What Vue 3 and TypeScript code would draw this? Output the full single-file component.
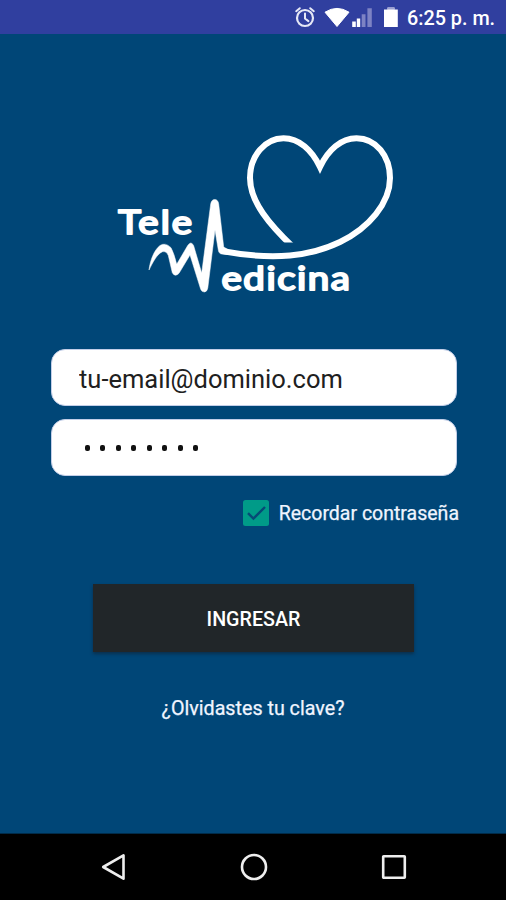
<script setup lang="ts">
import { ref } from 'vue'

const email = ref<string>('tu-email@dominio.com')
const passwordLength = 8
const remember = ref<boolean>(true)
</script>

<template>
  <div class="screen">
    <header class="status">
      <svg class="status-icons" viewBox="290 0 112 34" width="112" height="34">
        <g fill="none" stroke="#e6e8f6" stroke-width="2.2" stroke-linecap="round">
          <circle cx="305" cy="18" r="8" />
          <path d="M305 13.5v5l3.4 2.6M296.2 11.2l3.6-3M313.8 11.2l-3.6-3" stroke-width="2" />
        </g>
        <path d="M325 12.2Q337 4.6 349 12.2L337 26.5Z" fill="#fff" stroke="#fff" stroke-linejoin="round" />
        <path d="M352.2 21.5h3.6V27h-3.6zM356.8 18.6h3.4V27h-3.4z" fill="#fff" />
        <path d="M361.7 14.2h3.8V27h-3.8zM367.4 8.2h4.4V27h-4.4z" fill="#7d83c4" />
        <path d="M384 9.5h3.5V7.6h7v1.9h3.3V27H384z" fill="#fff" />
        <path d="M387.5 7.6h7v1.9h-7z" fill="#9da1d2" />
      </svg>
      <span class="clock">6:25 p. m.</span>
    </header>

    <main class="content">
      <svg class="logo" viewBox="110 125 290 175" width="290" height="175">
        <defs>
          <clipPath id="heart-cut">
            <path d="M110 125H400V300H110ZM274 242.6H300V249.5H274Z" clip-rule="evenodd" />
          </clipPath>
        </defs>
        <path
          d="M293 247C270 225 250 202 250 178C250 156 265 138.2 283.5 138.2C299 138.2 312 150 320 167C328 150 341 138.2 356.5 138.2C376 138.2 390 156 390 178C390 203 369 228 340 242C311 256 275 261 221.5 251"
          fill="none" stroke="#fff" stroke-width="6" clip-path="url(#heart-cut)" />
        <path
          d="M149 270C150 261 154 250 160 245.5Q165.5 242 171 247.7Q174 253 176.7 264.3L187.7 245.5Q191 240.5 193.6 245.5L201.7 273L210.7 204Q211.5 199.5 214.7 199.5Q218 199.5 218.7 204L223.7 247L228 249.5V254.5L220.5 253.7Q218.5 253 218.3 250L215 230L207.8 288Q207 292 204.3 292Q201.5 292 200.7 289.3L190 255L179 273.3Q175 277.5 172.3 272.7L168.3 255.5Q166.5 251 162.5 251.7C157 254 153 262 149 270Z"
          fill="#fff" stroke="#fff" stroke-width="0.5" />
        <g class="wordmark">
          <text transform="translate(118.3 233.5) scale(1.2 1)" textLength="61.5">Tele</text>
          <text transform="translate(221.5 290) scale(1.2 1)" textLength="107">edicina</text>
        </g>
      </svg>

      <form class="form" @submit.prevent>
        <input v-model="email" class="field" type="text" aria-label="Email" />
        <div class="field password">
          <span v-for="n in passwordLength" :key="n" class="dot"></span>
        </div>
        <label class="remember">
          <input v-model="remember" class="native" type="checkbox" />
          <svg class="check" viewBox="0 0 26 26" width="26" height="26">
            <rect width="26" height="26" rx="2.5" fill="#009b88" />
            <path v-if="remember" d="M5 13.2l5.4 5.4L22 7" fill="none" stroke="#064a76" stroke-width="2.4" />
          </svg>
          <span>Recordar contraseña</span>
        </label>
        <button class="submit" type="submit">INGRESAR</button>
        <a class="forgot">¿Olvidastes tu clave?</a>
      </form>
    </main>

    <nav class="navbar">
      <svg viewBox="0 0 28 28" width="28" height="28"><path d="M3.2 14L23.5 2.3V25.7Z" /></svg>
      <svg viewBox="0 0 28 28" width="28" height="28"><circle cx="14" cy="14" r="12" /></svg>
      <svg viewBox="0 0 28 28" width="28" height="28"><rect x="3.2" y="3.2" width="21.6" height="21.6" rx="0.5" /></svg>
    </nav>
  </div>
</template>

<style>
body {
  margin: 0;
  background: #004677;
}
</style>

<style scoped>
.screen {
  display: flex;
  flex-direction: column;
  width: 506px;
  height: 900px;
  overflow: hidden;
  background: #004677;
  color: #fff;
  font-family: Roboto, sans-serif;
}

.status {
  display: flex;
  align-items: center;
  justify-content: flex-end;
  gap: 5px;
  box-sizing: border-box;
  height: 34px;
  padding-right: 11px;
  background: #303f9f;
}

.status-icons {
  display: block;
}

.clock {
  width: 88px;
  padding-top: 3px;
  font-size: 19.8px;
  font-weight: 500;
  line-height: 22px;
  white-space: nowrap;
}

.content {
  display: flex;
  flex: 1;
  flex-direction: column;
  align-items: center;
  padding-top: 91px;
}

.logo {
  display: block;
  margin-left: 4px;
}

.wordmark {
  font-family: Lato, sans-serif;
  font-size: 32px;
  font-weight: 400;
  fill: #fff;
  stroke: #fff;
  stroke-width: 2px;
  stroke-linejoin: round;
}

.form {
  display: flex;
  flex-direction: column;
  width: 406px;
  margin: 49px 0 0 2px;
}

.field {
  box-sizing: border-box;
  width: 406px;
  height: 57px;
  margin: 0 0 13px;
  padding: 3px 27px 0;
  border: 1px solid #c3cee8;
  border-radius: 14px;
  outline: none;
  background: #fff;
  color: #202020;
  font-family: Roboto, sans-serif;
  font-size: 25.5px;
}

.password {
  display: flex;
  align-items: center;
  gap: 10.5px;
  margin-bottom: 0;
  padding: 0 32.5px;
}

.dot {
  width: 5px;
  height: 6px;
  border-radius: 2px;
  background: #111;
}

.remember {
  display: flex;
  align-items: center;
  align-self: flex-end;
  gap: 10px;
  height: 26px;
  margin: 24px -2px 0 0;
  color: #f0f5ff;
  font-size: 19.5px;
  white-space: nowrap;
  -webkit-text-stroke: 0.25px #f0f5ff;
}

.remember span {
  padding-top: 1px;
}

.native {
  display: none;
}

.submit {
  width: 321px;
  height: 68px;
  margin: 58px 0 0 42px;
  padding: 2px 0 0;
  border: 0;
  background: #212629;
  box-shadow: 0 2px 3px rgba(20, 25, 35, 0.5);
  color: #fff;
  font-family: Roboto, sans-serif;
  font-size: 19.7px;
  font-weight: 500;
}

.forgot {
  align-self: center;
  margin: 45px 2px 0 0;
  color: #f0f5ff;
  font-size: 19.7px;
  line-height: 24px;
  -webkit-text-stroke: 0.25px #f0f5ff;
}

.navbar {
  display: flex;
  align-items: center;
  justify-content: space-between;
  box-sizing: border-box;
  height: 67px;
  padding: 0 98px 1px 100px;
  border-top: 1px solid #002b49;
  background: #000;
}

.navbar svg {
  fill: none;
  stroke: #eee;
  stroke-width: 2.6px;
  stroke-linejoin: round;
}
</style>
